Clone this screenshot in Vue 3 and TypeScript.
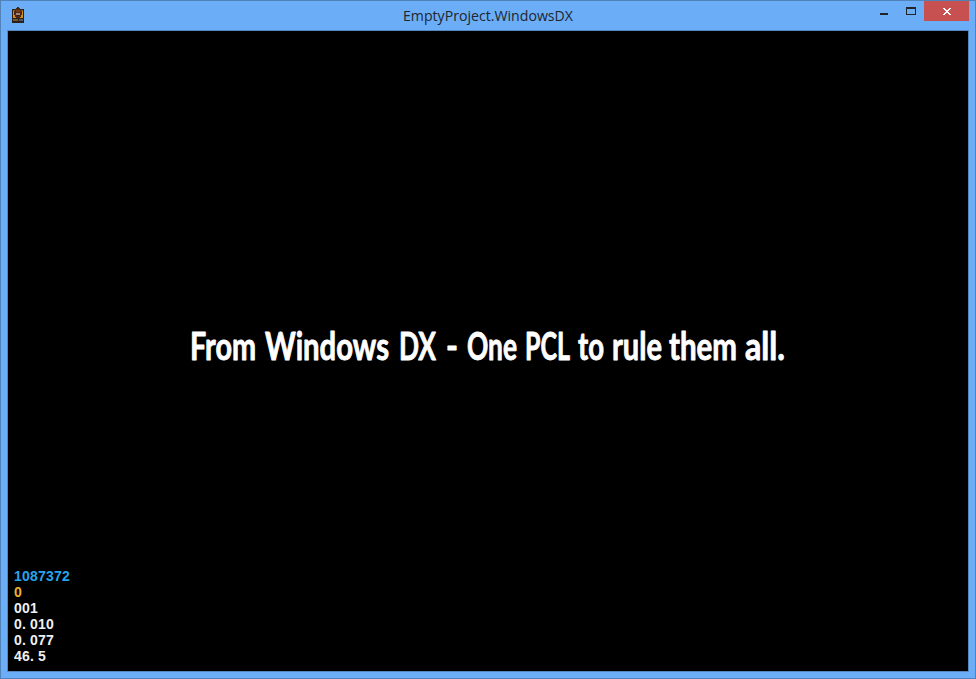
<script setup lang="ts">
interface Word { text: string; x: number; width: number }
interface Stat { text: string; tone: string }

const words: Word[] = [
  { text: 'From', x: 190, width: 66 },
  { text: 'Windows', x: 265, width: 124 },
  { text: 'DX', x: 399, width: 37 },
  { text: '-', x: 446, width: 12 },
  { text: 'One', x: 467, width: 50 },
  { text: 'PCL', x: 525, width: 45 },
  { text: 'to', x: 578, width: 26 },
  { text: 'rule', x: 612, width: 50 },
  { text: 'them', x: 669, width: 68 },
  { text: 'all.', x: 745, width: 40 },
]

const stats: Stat[] = [
  { text: '1087372', tone: 'blue' },
  { text: '0', tone: 'amber' },
  { text: '001', tone: 'white' },
  { text: '0.010', tone: 'white' },
  { text: '0.077', tone: 'white' },
  { text: '46.5', tone: 'white' },
]

const cells = (text: string): string => [...text].map((_, i) => i * 8).join(' ')
</script>

<template>
  <div class="window">
    <header class="titlebar">
      <svg class="app-icon" width="12" height="16" viewBox="0 0 12 16" shape-rendering="crispEdges">
        <path d="M0 2H12V16H0Z" fill="#2b2118" />
        <path d="M1 3H11V11H1Z" fill="#d48b1c" />
        <path d="M1 3H3V4H1ZM9 3H11V4H9Z" fill="#8d5a18" />
        <path d="M5 0H7V1H8V2H9V4H10V8H9V10H8V11H4V10H3V8H2V4H3V2H4V1H5Z" fill="#4c2917" />
        <path d="M4 3H8V5H4Z" fill="#743a1d" />
        <path d="M4 6H8V8H4Z" fill="#a98376" />
        <path d="M5 8H7V9H5Z" fill="#301d19" />
        <path d="M1 12H6V14H1Z" fill="#765530" />
        <path d="M7 12H11V14H7Z" fill="#55565a" />
      </svg>
      <svg class="title" width="174" height="28" viewBox="-1 0 174 28">
        <text x="0" y="20" textLength="170" lengthAdjust="spacingAndGlyphs">EmptyProject.WindowsDX</text>
      </svg>
      <div class="controls">
        <svg width="54" height="20" viewBox="0 0 54 20" shape-rendering="crispEdges">
          <path d="M10 12H18V14H10Z" fill="#222426" />
          <path d="M36 6H46V8H36ZM36 6H37V14H36ZM45 6H46V14H45ZM36 13H46V14H36Z" fill="#222426" />
        </svg>
        <button class="close" aria-label="Close">
          <svg width="8" height="7" viewBox="0 0 8 7" shape-rendering="crispEdges">
            <path d="M0 0H2V1H3V2H5V1H6V0H8V1H7V2H6V3H5V4H6V5H7V6H8V7H6V6H5V5H3V6H2V7H0V6H1V5H2V4H3V3H2V2H1V1H0Z" fill="#fff" />
          </svg>
        </button>
      </div>
    </header>
    <main class="screen">
      <svg class="message" width="960" height="50" viewBox="8 320 960 50">
        <text y="360"><tspan
          v-for="word in words"
          :key="word.text"
          :x="word.x"
          :textLength="word.width"
          lengthAdjust="spacingAndGlyphs"
        >{{ word.text }}</tspan></text>
      </svg>
      <div class="stats">
        <svg v-for="(stat, i) in stats" :key="i" :class="stat.tone" width="60" height="16" viewBox="0 0 60 16">
          <text :x="cells(stat.text)" y="13">{{ stat.text }}</text>
        </svg>
      </div>
    </main>
  </div>
</template>

<style>
body { background: #6badf6; }
</style>

<style scoped>
.window {
  box-sizing: border-box;
  width: 976px;
  height: 679px;
  padding: 0 6px 6px;
  background: #6badf6;
  border: 1px solid #4f82b9;
}
.titlebar {
  display: grid;
  grid-template-columns: 395px 174px 1fr;
  height: 29px;
}
.app-icon { margin: 6px 0 0 5px; }
.title text { font: 14.5px "Open Sans", sans-serif; fill: #20262e; }
.controls { display: flex; justify-content: flex-end; align-items: flex-start; }
.close {
  display: flex;
  align-items: center;
  justify-content: center;
  width: 45px;
  height: 20px;
  padding: 0 0 0 1px;
  border: 0;
  background: #c75050;
}
.screen {
  box-sizing: border-box;
  display: flex;
  flex-direction: column;
  justify-content: space-between;
  width: 962px;
  height: 642px;
  padding: 289px 0 7px;
  border: 1px solid #5388bf;
  background: #000;
}
.message { display: block; }
.message text {
  font: bold 39px Lato, sans-serif;
  fill: #fff;
  stroke: #fff;
  stroke-width: 0.9;
  stroke-linejoin: round;
}
.stats { display: flex; flex-direction: column; padding-left: 6px; }
.stats svg { display: block; }
.stats text { font: bold 14px "Liberation Sans", sans-serif; fill: currentColor; }
.blue { color: #24a4ec; }
.amber { color: #f2b02c; }
.white { color: #efefef; }
</style>
